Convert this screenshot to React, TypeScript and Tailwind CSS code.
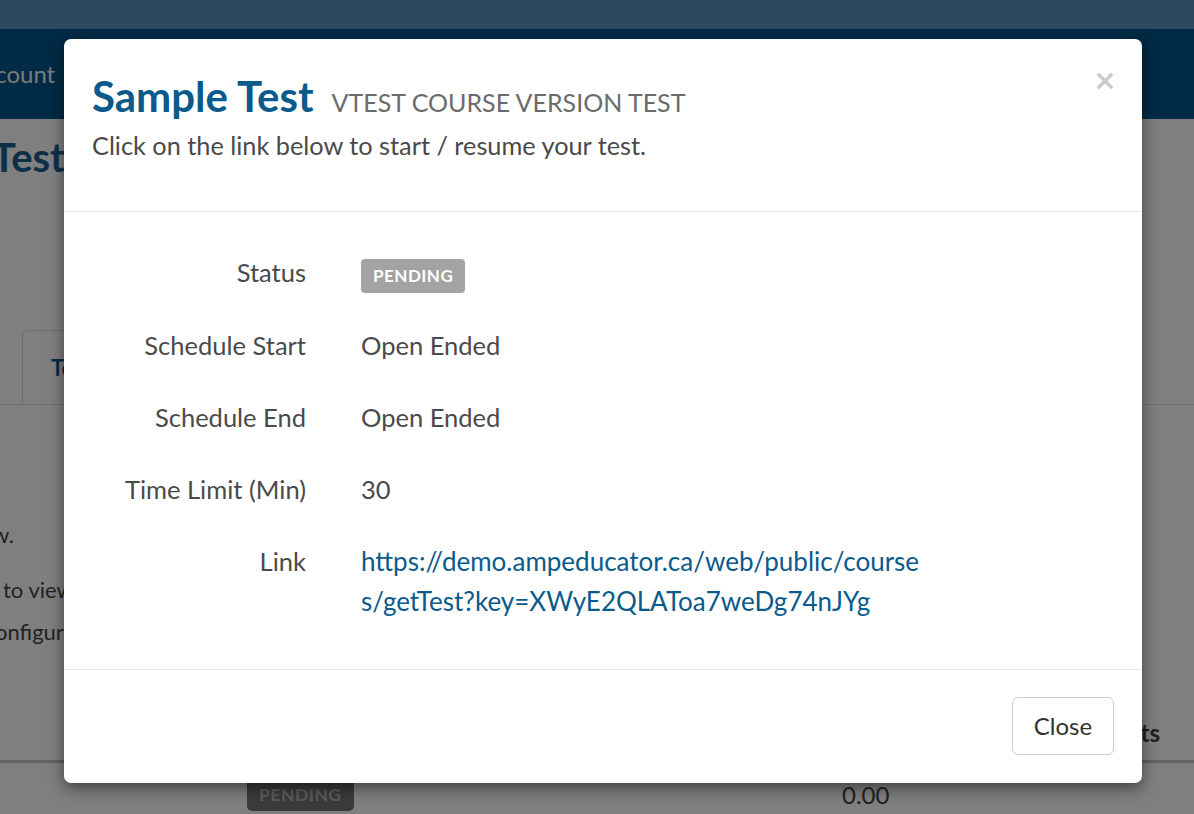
import React from "react";

const font = { fontFamily: "Lato, 'Noto Sans', sans-serif" };

function Row({ label, children }: { label: string; children: React.ReactNode }) {
  return (
    <div className="flex items-start">
      <div className="w-[242px] shrink-0 text-right leading-[40px] text-[#4a4a4a]">{label}</div>
      <div className="pl-[55px] leading-[40px] text-[#4a4a4a]">{children}</div>
    </div>
  );
}

export default function App() {
  return (
    <div className="relative h-[814px] w-full overflow-hidden bg-white text-[25.5px]" style={font}>
      {/* background page */}
      <div className="h-[29px] bg-[#5694ba]" />
      <div className="flex h-[90px] items-center bg-[#00548a]">
        <span className="ml-[-32px] text-[24px] text-[#f2f6fa]">Account</span>
      </div>
      <div className="h-[62px] pt-[16px]">
        <h1 className="ml-[-74px] whitespace-nowrap text-[40px] font-bold leading-[44px] text-[#1a5e8e]">My Test</h1>
      </div>
      <div className="mt-[149px] flex h-[75px] border-b border-[#dddddd]">
        <div className="ml-[22px] flex w-[200px] items-center rounded-t-[6px] border border-b-0 border-[#dddddd] bg-white pl-[28px] text-[22px] font-bold text-[#0f5a8a]">
          Tests
        </div>
      </div>
      <div className="pt-[109px] text-[22px] leading-[42px] text-[#444]">
        <div className="flex w-[14px] justify-end whitespace-nowrap">
          <span>Please find your tests below.</span>
        </div>
        <div className="mt-[13px] ml-[3px] whitespace-nowrap">to view the details of the test</div>
        <div className="ml-[-5px] whitespace-nowrap">onfiguration</div>
      </div>
      <div className="mt-[58px] flex h-[44px] items-center justify-end pr-[34px] text-[24px] font-bold text-[#404040]">
        Points
      </div>
      <div className="mt-[5px] h-[3px] bg-[#c4c4c4]" />
      <div className="relative flex h-[60px]">
        <span className="absolute left-[247px] top-[15px] rounded-[5px] bg-[#777] px-[12px] text-[17.5px] font-bold leading-[33px] tracking-[0.5px] text-[#b8b8b8]">
          PENDING
        </span>
        <span className="absolute left-[842px] top-[14px] text-[24px] text-[#444]">0.00</span>
      </div>

      {/* backdrop */}
      <div className="absolute inset-0 bg-black/50" />

      {/* modal */}
      <div className="absolute left-[64px] top-[39px] flex h-[744px] w-[1078px] flex-col rounded-[7px] bg-white shadow-[0_5px_15px_rgba(0,0,0,0.5)]">
        <div className="relative h-[173px] border-b border-[#e5e5e5] px-[28px] pt-[31px]">
          <div className="flex items-baseline">
            <span className="text-[42px] font-bold leading-[52px] text-[#0b5a8c]">Sample Test</span>
            <span className="ml-[18px] text-[25px] text-[#6b6b6b]">VTEST COURSE VERSION TEST</span>
          </div>
          <div className="mt-[6px] text-[25.3px] leading-[34px] text-[#4a4a4a]">Click on the link below to start / resume your test.</div>
          <svg className="absolute right-[29px] top-[34px]" width="16" height="16" viewBox="0 0 16 16">
            <path d="M2 2 L14 14 M14 2 L2 14" stroke="#cccccc" strokeWidth="3.6" strokeLinecap="square" />
          </svg>
        </div>
        <div className="flex flex-1 flex-col gap-[32px] border-b border-[#e5e5e5] pt-[40px]">
          <Row label="Status">
            <span className="inline-block rounded-[4px] bg-[#a3a3a3] px-[12px] align-middle text-[17px] font-bold leading-[34px] tracking-[0.5px] text-white">
              PENDING
            </span>
          </Row>
          <Row label="Schedule Start">Open Ended</Row>
          <Row label="Schedule End">Open Ended</Row>
          <Row label="Time Limit (Min)">30</Row>
          <Row label="Link">
            <a className="text-[26px] text-[#0b5a8c]">
              https://demo.ampeducator.ca/web/public/course
              <br />
              s/getTest?key=XWyE2QLAToa7weDg74nJYg
            </a>
          </Row>
        </div>
        <div className="flex h-[113px] justify-end px-[28px] pt-[27px]">
          <button className="h-[58px] w-[102px] rounded-[6px] border border-[#cccccc] bg-white text-[24px] text-[#333]">
            Close
          </button>
        </div>
      </div>
    </div>
  );
}
